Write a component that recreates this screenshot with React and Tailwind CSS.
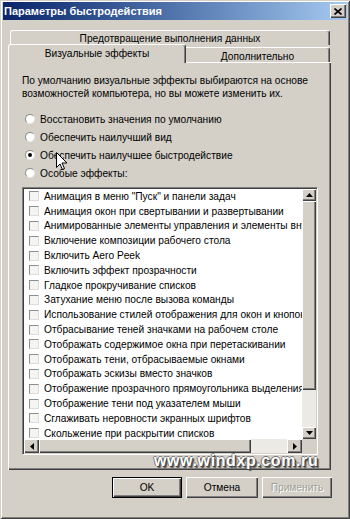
const items = [
  'Анимация в меню "Пуск" и панели задач',
  'Анимация окон при свертывании и развертывании',
  'Анимированные элементы управления и элементы внутри окна',
  'Включение композиции рабочего стола',
  'Включить Aero Peek',
  'Включить эффект прозрачности',
  'Гладкое прокручивание списков',
  'Затухание меню после вызова команды',
  'Использование стилей отображения для окон и кнопок',
  'Отбрасывание теней значками на рабочем столе',
  'Отображать содержимое окна при перетаскивании',
  'Отображать тени, отбрасываемые окнами',
  'Отображать эскизы вместо значков',
  'Отображение прозрачного прямоугольника выделения',
  'Отображение тени под указателем мыши',
  'Сглаживать неровности экранных шрифтов',
  'Скольжение при раскрытии списков',
];

const radios = [
  'Восстановить значения по умолчанию',
  'Обеспечить наилучший вид',
  'Обеспечить наилучшее быстродействие',
  'Особые эффекты:',
];

function Raised({ className = '', children }) {
  return (
    <div
      className={
        'bg-[#d4d0c8] shadow-[inset_1px_1px_0_#ffffff,inset_-1px_-1px_0_#404040,inset_-2px_-2px_0_#808080] flex items-center justify-center ' +
        className
      }
    >
      {children}
    </div>
  );
}

function Tri({ dir }) {
  const pts = {
    up: '0,4 3.5,0 7,4',
    down: '0,0 3.5,4 7,0',
    left: '4,0 0,3.5 4,7',
    right: '0,0 4,3.5 0,7',
  }[dir];
  const w = dir === 'up' || dir === 'down' ? 7 : 4;
  const h = dir === 'up' || dir === 'down' ? 4 : 7;
  return (
    <svg width={w} height={h} viewBox={`0 0 ${w} ${h}`}>
      <polygon points={pts} fill="#000" />
    </svg>
  );
}

export default function App() {
  return (
    <div className="relative w-[350px] h-[519px] overflow-hidden bg-[#d4d0c8] text-[10.2px] leading-[13px] text-black font-['Liberation_Sans',Arial,sans-serif] shadow-[inset_1px_1px_0_#d4d0c8,inset_-1px_-1px_0_#404040,inset_2px_2px_0_#ffffff,inset_-2px_-2px_0_#808080] flex flex-col pt-[2px] px-[3px]">
      {/* Title bar */}
      <div className="h-[18px] flex items-center bg-gradient-to-r from-[#0a246a] to-[#a6caf0]">
        <span className="pl-[1px] text-white font-bold text-[11px] leading-[14px] whitespace-nowrap">
          Параметры быстродействия
        </span>
        <Raised className="ml-auto mr-[1px] w-[16px] h-[14px]">
          <svg width="8" height="7" viewBox="0 0 8 7">
            <path d="M0.5 0.5 L7.5 6.5 M7.5 0.5 L0.5 6.5" stroke="#000" strokeWidth="1.6" />
          </svg>
        </Raised>
      </div>

      {/* Tabs */}
      <div className="mt-[10px] ml-[5px] w-[323px] flex flex-col">
        <div className="ml-[2px] w-[320px] h-[15px] rounded-t-[3px] border-t border-l border-white border-r border-r-[#404040] shadow-[inset_-1px_0_0_#808080] flex items-center justify-center whitespace-nowrap">
          Предотвращение выполнения данных
        </div>
        <div className="h-[17px] flex items-end">
          <div className="relative z-10 -mb-px w-[178px] h-[19px] bg-[#d4d0c8] rounded-t-[3px] border-t border-l border-white border-r border-r-[#404040] shadow-[inset_-1px_0_0_#808080] flex items-start justify-center pt-[2px] whitespace-nowrap">
            Визуальные эффекты
          </div>
          <div className="w-[144px] h-[15px] rounded-tr-[3px] border-t border-white border-r border-r-[#404040] shadow-[inset_-1px_0_0_#808080] flex items-center justify-center pt-[2px] whitespace-nowrap">
            Дополнительно
          </div>
        </div>

        {/* Panel */}
        <div className="h-[408px] shadow-[inset_1px_1px_0_#ffffff,inset_-1px_-1px_0_#404040,inset_-2px_-2px_0_#808080] pl-[14px] pt-[12px] flex flex-col">
          <p className="leading-[13px]">
            По умолчанию визуальные эффекты выбираются на основе
            <br />
            возможностей компьютера, но вы можете изменить их.
          </p>
          <div className="mt-[10px] flex flex-col">
            {radios.map((r, i) => (
              <div key={r} className="h-[18px] flex items-center">
                <div className="ml-[3px] w-[10px] h-[10px] rounded-full bg-white border border-[#8a8a8a] border-b-[#e8e8e8] border-r-[#e8e8e8] flex items-center justify-center">
                  {i === 2 && <div className="w-[4px] h-[4px] rounded-full bg-black" />}
                </div>
                <span className="ml-[5px] whitespace-nowrap">{r}</span>
              </div>
            ))}
          </div>

          {/* List box */}
          <div className="mt-[5px] w-[296px] h-[268px] border border-t-[#808080] border-l-[#808080] border-r-white border-b-white shadow-[inset_1px_1px_0_#404040,inset_-1px_-1px_0_#d4d0c8] p-px">
            <div className="w-[292px] h-[264px] grid grid-cols-[278px_14px] grid-rows-[250px_14px] bg-white">
              <div className="overflow-hidden flex flex-col">
                {items.map((t) => (
                  <div key={t} className="h-[14.8px] shrink-0 flex items-center pl-[5px] whitespace-nowrap">
                    <div className="w-[10px] h-[10px] shrink-0 bg-[#f4f4f2] border border-[#8e8e8e] border-r-[#dcdcdc] border-b-[#dcdcdc]" />
                    <span className="ml-[5px]">{t}</span>
                  </div>
                ))}
              </div>
              {/* vertical scrollbar */}
              <div className="flex flex-col bg-[#eceae5]">
                <Raised className="h-[12px] shrink-0">
                  <Tri dir="up" />
                </Raised>
                <Raised className="h-[189px] shrink-0" />
                <div className="flex-1" />
                <Raised className="h-[12px] shrink-0">
                  <Tri dir="down" />
                </Raised>
              </div>
              {/* horizontal scrollbar */}
              <div className="flex bg-[#eceae5]">
                <Raised className="w-[15px] shrink-0">
                  <Tri dir="left" />
                </Raised>
                <Raised className="w-[212px] shrink-0" />
                <div className="flex-1" />
                <Raised className="w-[15px] shrink-0">
                  <Tri dir="right" />
                </Raised>
              </div>
              <div className="bg-[#d4d0c8]" />
            </div>
          </div>
        </div>

        {/* Buttons */}
        <div className="mt-[7px] flex justify-end gap-[4px] -mr-px">
          <div className="w-[70px] h-[21px] border border-black">
            <Raised className="w-full h-full">OK</Raised>
          </div>
          <Raised className="w-[72px] h-[21px]">Отмена</Raised>
          <Raised className="w-[70px] h-[21px] text-[#a09e98] [text-shadow:1px_1px_0_#ffffff]">
            Применить
          </Raised>
        </div>
      </div>

      {/* watermark */}
      <div className="absolute left-[154px] top-[452px] text-[16px] leading-[18px] font-bold tracking-[0.6px] text-white [text-shadow:1px_1px_0_#444,-1px_0_0_#777,0_-1px_0_#777,2px_2px_1px_#555] whitespace-nowrap">
        www.windxp.com.ru
      </div>

      {/* mouse cursor */}
      <svg className="absolute left-[56px] top-[152px]" width="12" height="19" viewBox="0 0 12 19">
        <path d="M0.5 0.5 L0.5 15.5 L4 12 L6.5 17.5 L8.5 16.5 L6 11 L11 11 Z" fill="#fff" stroke="#000" strokeWidth="1" />
      </svg>
    </div>
  );
}
